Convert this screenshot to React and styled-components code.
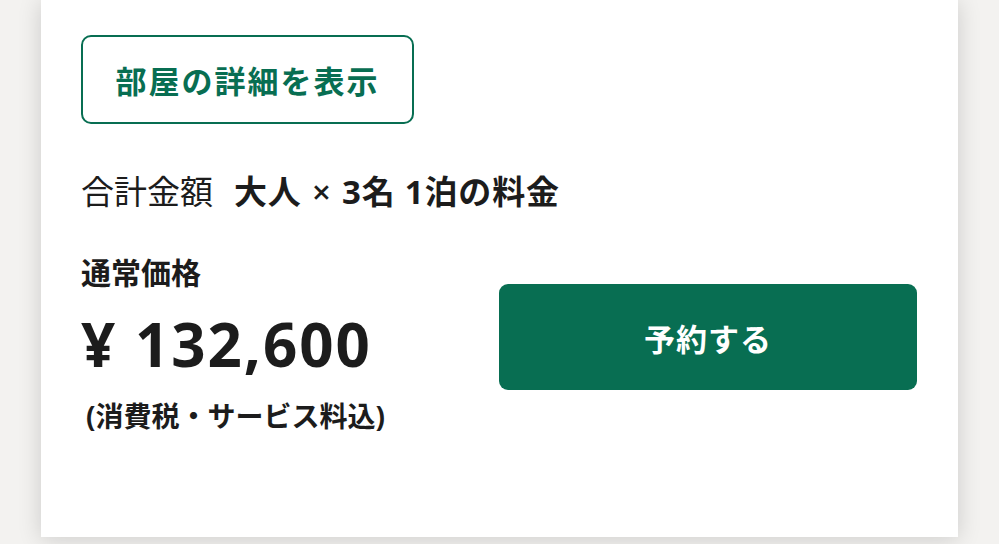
import React from "react";
import styled, { createGlobalStyle } from "styled-components";

const GREEN = "#086e52";

const Global = createGlobalStyle`
  html, body { margin: 0; padding: 0; }
  body {
    background: #f3f2f0;
    font-family: "Open Sans", "Noto Sans CJK JP", sans-serif;
    color: #1c1c1c;
    overflow: hidden;
  }
`;

const Page = styled.div`
  width: 999px;
  height: 544px;
  padding: 0 41px 0 41px;
  box-sizing: border-box;
`;

const Card = styled.section`
  background: #ffffff;
  height: 537px;
  box-sizing: border-box;
  padding: 35px 41px 0 40px;
  box-shadow: 0 2px 22px rgba(0, 0, 0, 0.16);
  display: flex;
  flex-direction: column;
  align-items: flex-start;
`;

const OutlineButton = styled.button`
  width: 333px;
  height: 89px;
  box-sizing: border-box;
  border: 2px solid ${GREEN};
  border-radius: 10px;
  background: #fff;
  color: ${GREEN};
  font-family: inherit;
  font-size: 31px;
  font-weight: 700;
  letter-spacing: 2px;
  display: flex;
  align-items: center;
  justify-content: center;
  padding: 0;
  cursor: pointer;
`;

const TotalLine = styled.div`
  margin-top: 44px;
  font-size: 33px;
  line-height: 48px;
  display: flex;
  gap: 21px;
`;

const TotalLabel = styled.span`
  font-weight: 400;
`;

const TotalDetail = styled.span`
  font-weight: 700;
  letter-spacing: 0.8px;
`;

const Times = styled.span`
  font-weight: 600;
  margin: 0 1px;
`;

const PriceRow = styled.div`
  width: 100%;
  display: flex;
  justify-content: space-between;
  align-items: flex-start;
  margin-top: 37px;
`;

const PriceBlock = styled.div`
  display: flex;
  flex-direction: column;
`;

const PriceLabel = styled.div`
  font-size: 30px;
  font-weight: 700;
  line-height: 40px;
`;

const Price = styled.div`
  margin-top: 15px;
  font-size: 60px;
  font-weight: 700;
  line-height: 72px;
  letter-spacing: 2px;
`;

const Tax = styled.div`
  margin-top: 17px;
  margin-left: 5px;
  font-size: 28px;
  font-weight: 700;
  line-height: 38px;
`;

const ReserveButton = styled.button`
  margin-top: 31px;
  width: 418px;
  height: 106px;
  border: none;
  border-radius: 9px;
  background: ${GREEN};
  color: #fff;
  font-family: inherit;
  font-size: 31px;
  font-weight: 700;
  letter-spacing: 1px;
  cursor: pointer;
`;

export default function App() {
  return (
    <>
      <Global />
      <Page>
        <Card>
          <OutlineButton>部屋の詳細を表示</OutlineButton>
          <TotalLine>
            <TotalLabel>合計金額</TotalLabel>
            <TotalDetail>
              大人 <Times>×</Times> 3名 1泊の料金
            </TotalDetail>
          </TotalLine>
          <PriceRow>
            <PriceBlock>
              <PriceLabel>通常価格</PriceLabel>
              <Price>¥ 132,600</Price>
              <Tax>(消費税・サービス料込)</Tax>
            </PriceBlock>
            <ReserveButton>予約する</ReserveButton>
          </PriceRow>
        </Card>
      </Page>
    </>
  );
}
